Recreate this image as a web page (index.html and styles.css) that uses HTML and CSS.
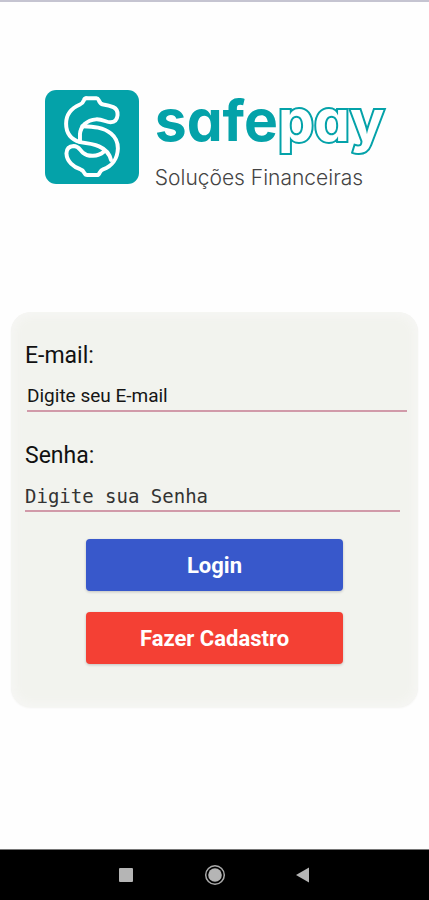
FILE: index.html
```html
<!DOCTYPE html>
<html lang="pt-BR">
<head>
<meta charset="utf-8">
<meta name="viewport" content="width=device-width, initial-scale=1">
<title>Safepay</title>
<link rel="stylesheet" href="styles.css">
</head>
<body>
<header class="brand">
  <svg class="mark" viewBox="43 43 285 285" aria-hidden="true">
    <rect x="43" y="43" width="285" height="285" rx="34" fill="#04a2a9"/>
    <g fill="none" stroke="#fff" stroke-width="12" stroke-linejoin="round" stroke-linecap="round">
      <path d="M168 68H199Q203 68 206 74Q210 85 220 87Q237 90 250 95Q264 101 263 119Q261 140 242 141C228 141 218 131 198 132C169 134 151 153 149 177V201"/>
      <path d="M168 68Q163 68 161 74Q157 84 149 87C121 99 107 120 107 145C107 174 124 193 149 201C188 206 233 212 243 255"/>
      <path d="M156 153C190 154 220 156 243 175C259 188 264 202 264 220C263 250 247 274 219 284Q213 286 209 293Q206 301 200 301H171Q165 301 162 294Q158 286 151 284C130 277 109 260 108 235Q109 214 130 213C145 213 148 224 158 233C173 246 203 246 221 230"/>
    </g>
  </svg>
  <div class="brand-text">
    <h1 class="wordmark">safe<span class="outline">pay</span></h1>
    <p class="tagline">Soluções Financeiras</p>
  </div>
</header>
<main class="content">
  <form class="card">
    <label class="label" for="email">E-mail:</label>
    <input class="field field-email" id="email" type="email" placeholder="Digite seu E-mail">
    <label class="label label-next" for="senha">Senha:</label>
    <input class="field field-password" id="senha" type="password" placeholder="Digite sua Senha">
    <div class="actions">
      <button class="button login" type="submit">Login</button>
      <button class="button register" type="button">Fazer Cadastro</button>
    </div>
  </form>
</main>
<nav class="system-bar" aria-label="Sistema">
  <button class="key" type="button" aria-label="Recentes"><svg viewBox="0 0 24 24"><rect x="4" y="5" width="14" height="14" rx="1" fill="#b5b5b5"/></svg></button>
  <button class="key" type="button" aria-label="Início"><svg viewBox="0 0 24 24"><circle cx="12" cy="12" r="9.300" fill="none" stroke="#aaa" stroke-width="1.500"/><circle cx="12" cy="12" r="6.800" fill="#b5b5b5"/></svg></button>
  <button class="key" type="button" aria-label="Voltar"><svg viewBox="0 0 24 24"><path d="M18 4.500V19.500L5 12Z" fill="#b5b5b5"/></svg></button>
</nav>
</body>
</html>
```
FILE: styles.css
```css
* {
  box-sizing: border-box;
}

body {
  margin: 0;
  min-height: 100vh;
  display: flex;
  flex-direction: column;
  border-top: 2px solid #c5c4d1;
  background: #fefefe;
  font-family: Roboto, sans-serif;
  color: #111;
}

.brand {
  display: flex;
  justify-content: center;
  gap: 16px;
  padding-top: 88px;
}

.mark {
  width: 94px;
  height: 94px;
  flex: none;
}

.wordmark {
  margin: 0;
  font: 700 57px/62px Inter, sans-serif;
  font-feature-settings: "cv11";
  color: #04a2a9;
}

.outline {
  color: #fff;
  -webkit-text-stroke: 4px #04a2a9;
  paint-order: stroke fill;
}

.tagline {
  margin: 12px 0 0;
  font: 300 21px/28px Inter, sans-serif;
  color: #444;
}

.content {
  flex: 1;
  padding: 120px 11px 24px;
}

.card {
  padding: 29px 14px 43px;
  border-radius: 20px;
  background: #f2f3ee;
  box-shadow: inset 0 0 8px 4px #f6f6f4, 0 1px 2px #f3f3f1;
}

.label {
  display: block;
  font-size: 23px;
  line-height: 30px;
}

.label-next {
  margin-top: 29px;
}

.field {
  display: block;
  height: 41px;
  padding: 10px 0 0;
  border: 0;
  border-bottom: 2px solid #d19aa9;
  border-radius: 0;
  background: transparent;
  color: #111;
  outline: none;
}

.field::placeholder {
  color: #151515;
  opacity: 1;
}

.field-email {
  width: calc(100% + 1px);
  margin-left: 2px;
  font: 400 19px/26px Roboto, sans-serif;
}

.field-password {
  width: calc(100% - 4px);
  font: 400 19px/26px "DejaVu Sans Mono", monospace;
}

.field-password::placeholder {
  color: #333;
}

.actions {
  display: grid;
  gap: 21px;
  width: 68%;
  margin: 27px auto 0;
}

.button {
  height: 52px;
  padding: 2px 0 0;
  border: 0;
  border-radius: 4px;
  box-shadow: 0 1px 3px #0003;
  font: 700 22px/28px Roboto, sans-serif;
  color: #fff;
}

.login {
  background: #3858cb;
}

.register {
  background: #f44034;
}

.system-bar {
  display: flex;
  justify-content: center;
  gap: 64px;
  padding: 13px 0;
  border-top: 1px solid #777;
  background: #000;
}

.key {
  width: 24px;
  height: 24px;
  padding: 0;
  border: 0;
  background: none;
}

.key svg {
  display: block;
}
```
